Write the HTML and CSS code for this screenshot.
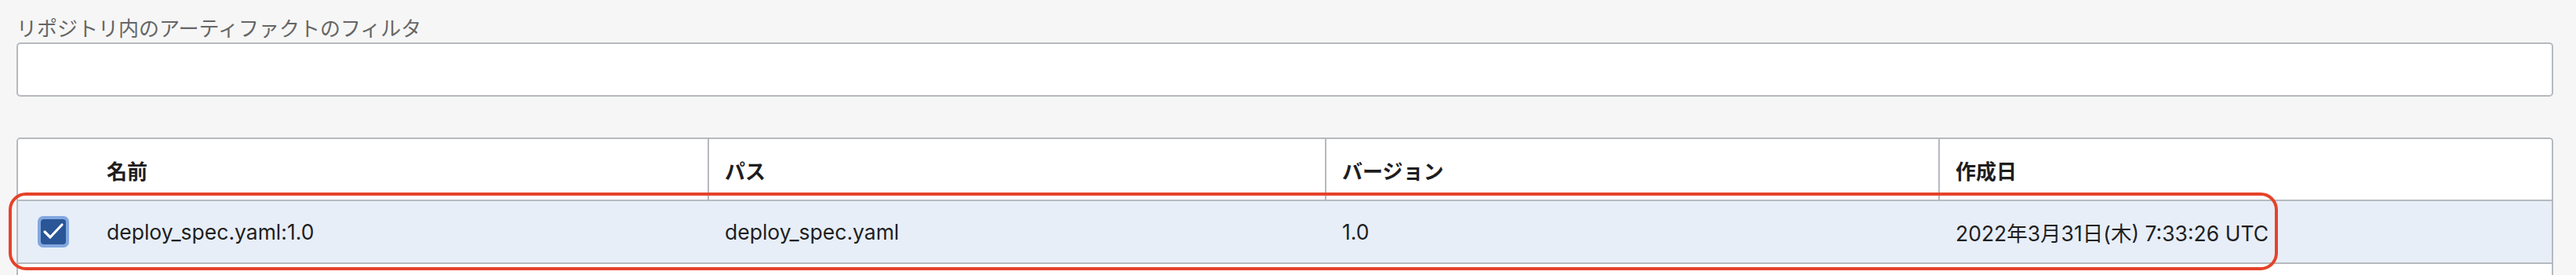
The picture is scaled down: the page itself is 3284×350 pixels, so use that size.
FILE: index.html
```html
<!DOCTYPE html>
<html lang="ja">
<head>
<meta charset="utf-8">
<title>アーティファクト</title>
<link rel="stylesheet" href="styles.css">
</head>
<body>
<div class="page">
  <label class="field-label" for="filter">リポジトリ内のアーティファクトのフィルタ</label>
  <input class="filter-input" id="filter" type="text">

  <div class="table">
    <div class="row head">
      <div class="cell check-cell"></div>
      <div class="cell">名前</div>
      <div class="cell divided">パス</div>
      <div class="cell divided">バージョン</div>
      <div class="cell divided">作成日</div>
    </div>
    <div class="row body selected">
      <div class="cell check-cell">
        <span class="checkbox">
          <span class="checkbox-box">
            <svg width="32" height="32" viewBox="0 0 32 32"><polyline points="5,16 12,23 27,7" fill="none" stroke="#fff" stroke-width="3.2" stroke-linecap="round" stroke-linejoin="round"/></svg>
          </span>
        </span>
      </div>
      <div class="cell">deploy_spec.yaml:1.0</div>
      <div class="cell">deploy_spec.yaml</div>
      <div class="cell">1.0</div>
      <div class="cell">2022年3月31日(木) 7:33:26 UTC</div>
    </div>
    <div class="row body"></div>
  </div>
</div>
<div class="annotation"></div>
</body>
</html>
```

FILE: styles.css
```css
* { box-sizing: border-box; }

html, body {
  margin: 0;
  background: #f6f6f6;
}

body {
  position: relative;
  height: 350px;
  overflow: hidden;
  font-family: Inter, "Noto Sans CJK JP", sans-serif;
  color: #1f1f1f;
}

.page {
  padding: 18px 29px 0 21px;
  display: flex;
  flex-direction: column;
}

.field-label {
  font-family: "Noto Sans CJK JP", sans-serif;
  font-size: 26px;
  line-height: 33px;
  color: #666;
  margin-bottom: 3px;
}

.filter-input {
  height: 69px;
  width: 100%;
  border: 2px solid #b6babf;
  border-radius: 5px;
  background: #fff;
  outline: none;
}

.table {
  margin-top: 52px;
  border: 2px solid #b6babf;
  border-bottom: none;
  border-radius: 5px 5px 0 0;
  background: #fff;
  height: 175px;
  overflow: hidden;
}

.row {
  display: grid;
  grid-template-columns: 91px 788px 787px 782px 1fr;
  border-bottom: 2px solid #b6babf;
}

.row.head {
  height: 79px;
  background: #fff;
}

.row.body {
  height: 80px;
}

.row.selected {
  background: #e7eef8;
}

.cell {
  display: flex;
  align-items: center;
  padding-left: 22px;
  font-size: 26.5px;
  white-space: nowrap;
}

.head .cell {
  font-size: 26px;
  font-weight: 600;
  color: #1e1e1e;
  padding-top: 2px;
}

.head .cell.divided {
  border-left: 2px solid #b6babf;
  padding-left: 20px;
}

.cell.check-cell {
  padding-left: 25px;
}

.checkbox {
  width: 40px;
  height: 40px;
  border-radius: 7px;
  background: #82a7df;
  display: flex;
  align-items: center;
  justify-content: center;
}

.checkbox-box {
  width: 32px;
  height: 32px;
  border-radius: 4px;
  background: #2a5596;
  display: flex;
}

.annotation {
  position: absolute;
  left: 11px;
  top: 245px;
  width: 2893px;
  height: 99px;
  border: 4px solid #e5432a;
  border-radius: 22px;
  pointer-events: none;
}
```
